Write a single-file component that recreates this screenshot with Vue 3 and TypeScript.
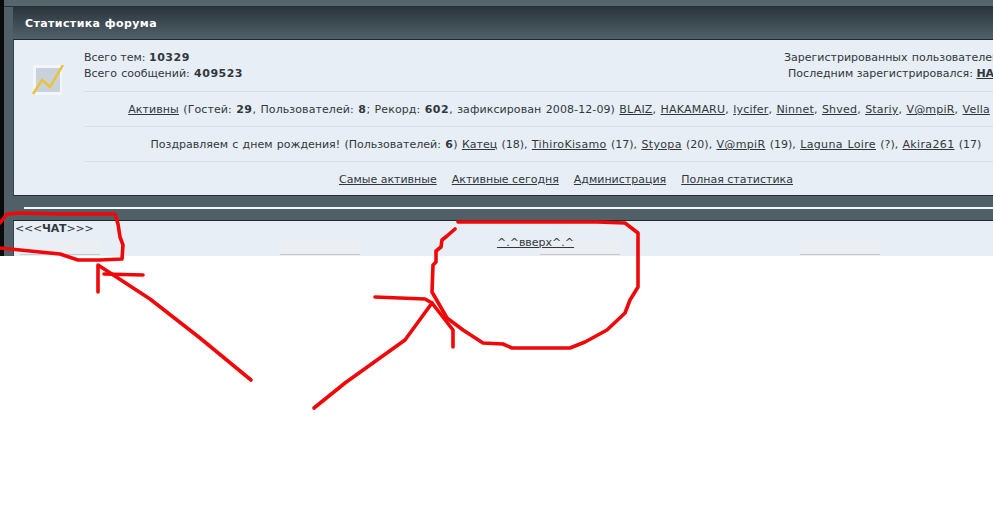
<script setup lang="ts">
const birthdays = [
  ['Катец', '18', false],
  ['TihiroKisamo', '17', true],
  ['Styopa', '20', true],
  ['V@mpiR', '19', true],
  ['Laguna Loire', '?', true],
  ['Akira261', '17', true],
] as const
const active = ['BLAIZ', 'HAKAMARU', 'lycifer', 'Ninnet', 'Shved', 'Stariy', 'V@mpiR', 'Vella']
const footer = ['Самые активные', 'Активные сегодня', 'Администрация', 'Полная статистика']
const buttons = [1, 2, 3, 4]
const strokes = [
  'M0 223 L7 214 L20 213 L60 214 L115 214 L118 224 L120 237 L123 245 L122 259 L100 260 L78 260 L60 254 L30 251 L0 248',
  'M98 292 L98 265 L150 299 L200 338 L251 380',
  'M104 274 L143 275',
  'M314 408 L345 383 L405 340 L432 303 L425 299 L375 297',
  'M432 303 L453 330 L453 347',
  'M458 222 L597 222 L625 223 L638 233 L638 287 L630 300 L625 313 L607 330 L585 342 L570 348 L512 348 L503 344 L483 343 L463 330 L447 318 L432 292 L433 265 L436 262 L436 251 L441 247 L442 240 L447 236 L455 229',
]
</script>

<template>
  <div class="page">
    <div class="forum">
      <div class="top-bar"></div>
      <section class="panel">
        <h2 class="panel-title">Статистика форума</h2>
        <div class="panel-body">
          <div class="icon-col">
            <svg class="chart" width="32" height="32" viewBox="0 0 32 32">
              <rect x="1" y="0" width="29" height="30" fill="#f3f6f9" />
              <rect x="4" y="3" width="24" height="24" fill="#c9d2dc" />
              <path d="M1 29 L10 15 L18 22 L31 0" fill="none" stroke="#e9c33c" stroke-width="2.6" />
            </svg>
          </div>
          <div class="stats">
            <div class="totals">
              <div>
                <div class="tight">Всего тем: <b>10329</b></div>
                <div>Всего сообщений: <b>409523</b></div>
              </div>
              <div class="totals-right">
                <div>Зарегистрированных пользователей: <b>14210</b></div>
                <div class="tight">Последним зарегистрировался: <b class="newest"><a>HAKAMARU</a></b></div>
              </div>
            </div>
            <div class="row active-row">
              <a>Активны</a> (Гостей: <b>29</b>, Пользователей: <b>8</b>; Рекорд: <b>602</b>, зафиксирован 2008-12-09)
              <template v-for="(name, i) in active" :key="name"><a class="member">{{ name }}</a><span v-if="i < active.length - 1">, </span>{{ ' ' }}</template>
            </div>
            <div class="row">
              Поздравляем с днем рождения! (Пользователей: <b>6</b>)
              <template v-for="(b, i) in birthdays" :key="b[0]"><a :class="{ latin: b[2] }">{{ b[0] }}</a> ({{ b[1] }})<span v-if="i < birthdays.length - 1">, </span>{{ ' ' }}</template>
            </div>
            <div class="row links">
              <a v-for="f in footer" :key="f">{{ f }}</a>
            </div>
          </div>
        </div>
      </section>
      <div class="divider"><div class="white-line"></div></div>
      <section class="chat">
        <div class="chat-text">&lt;&lt;&lt;<strong>ЧАТ</strong>&gt;&gt;&gt;</div>
        <div class="up"><a>^.^вверх^.^</a></div>
        <div class="buttons">
          <div v-for="b in buttons" :key="b" class="btn"></div>
        </div>
      </section>
    </div>
    <svg class="sketch" width="993" height="512" viewBox="0 0 993 512">
      <path v-for="(d, i) in strokes" :key="i" :d="d" fill="none" stroke="#f00808" stroke-width="3.6" stroke-linejoin="round" stroke-linecap="round" />
    </svg>
  </div>
</template>

<style>
html, body { margin: 0; background: #fff; }
</style>

<style scoped>
.page {
  position: relative;
  width: 993px;
  height: 512px;
  overflow: hidden;
  background: #fff;
  font-family: "DejaVu Sans", Verdana, sans-serif;
  font-size: 11px;
  color: #30383e;
}
.forum {
  width: 1100px;
  height: 256px;
  overflow: hidden;
  box-sizing: border-box;
  background: #515f67;
  border-left: 4px solid #0a0a0a;
  padding-left: 9px;
}
.top-bar {
  height: 6px;
  background: #56646c;
  border-bottom: 1px solid #26323a;
  margin-left: -9px;
}
.panel {
  width: 1060px;
}
.panel-title {
  margin: 0;
  height: 33px;
  box-sizing: border-box;
  padding: 9px 0 0 12px;
  background: linear-gradient(#2a353b, #51616a);
  border-bottom: 1px solid #1f282d;
  color: #fff;
  font-size: 11px;
  letter-spacing: 0.4px;
  font-weight: bold;
  line-height: 15px;
}
.panel-body {
  display: flex;
  height: 156px;
  box-sizing: border-box;
  background: #e8eef5;
  border-bottom: 1px solid #222d33;
  border-left: 1px solid #38444b;
}
.icon-col {
  width: 70px;
  flex: none;
  padding-top: 25px;
  box-sizing: border-box;
  padding-left: 18px;
}
.chart { display: block; filter: blur(0.4px); }
.stats {
  width: 964px;
  flex: none;
  word-spacing: 0.8px;
}
.totals {
  display: flex;
  justify-content: space-between;
  height: 52px;
  box-sizing: border-box;
  padding-top: 10px;
  line-height: 16px;
  border-bottom: 1px solid #d8dfe7;
}
.tight { word-spacing: 0; }
.totals-right { text-align: right; }
b { letter-spacing: 0.5px; }
.newest { letter-spacing: 0; }
a {
  text-decoration: underline;
  color: #30383e;
}
.latin { letter-spacing: 0.35px; }
.member { letter-spacing: 0.2px; }
.row {
  height: 35px;
  box-sizing: border-box;
  padding-top: 10px;
  line-height: 16px;
  text-align: center;
  border-bottom: 1px solid #d8dfe7;
  white-space: nowrap;
}
.active-row {
  letter-spacing: 0.09px;
  padding-right: 14px;
}
.links {
  border-bottom: 0;
  display: flex;
  justify-content: center;
  gap: 15px;
  word-spacing: 0;
}
.divider {
  height: 25px;
  box-sizing: border-box;
  padding-top: 11px;
  border-bottom: 1px solid #1f282d;
}
.white-line {
  margin-left: 11px;
  height: 2px;
  background: #f4f7fa;
}
.chat {
  width: 1060px;
  height: 35px;
  background: #e8eef5;
  border-left: 1px solid #38444b;
  box-sizing: border-box;
}
.chat-text {
  padding: 1px 0 0 1px;
  line-height: 14px;
  white-space: nowrap;
  letter-spacing: -0.2px;
}
.up {
  position: relative;
  z-index: 1;
  width: 1043px;
  text-align: center;
  line-height: 14px;
}
.buttons {
  display: flex;
  gap: 180px;
  margin-top: -11px;
  padding-left: 6px;
}
.btn {
  width: 80px;
  height: 16px;
  box-sizing: border-box;
  background: #ebeff3;
  border-bottom: 1px solid #c4c9ce;
  margin-bottom: -1px;
}
.sketch {
  position: absolute;
  left: 0;
  top: 0;
  pointer-events: none;
}
</style>
